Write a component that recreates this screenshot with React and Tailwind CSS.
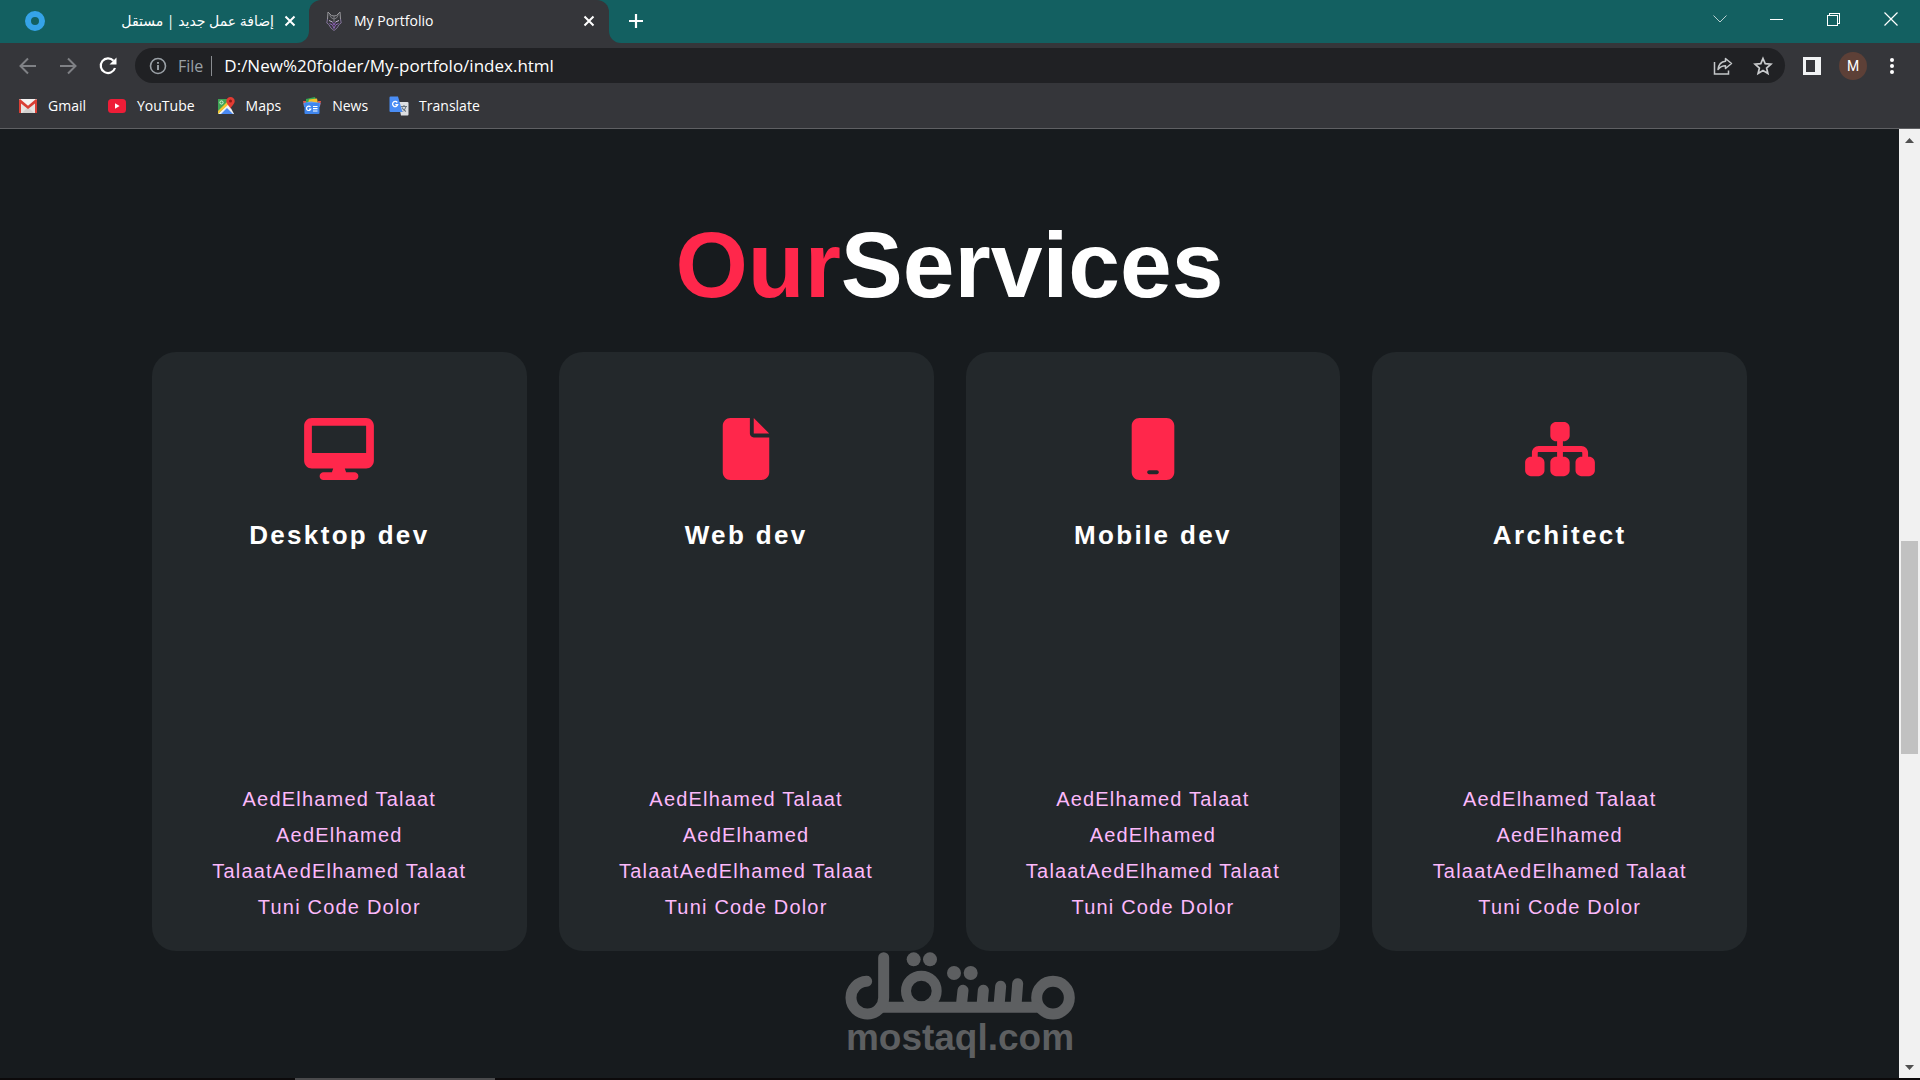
import React from "react";
import { FaDesktop, FaFile, FaMobile, FaSitemap } from "react-icons/fa6";

function CloseIcon({ className }) {
  return (
    <svg viewBox="0 0 12 12" className={className} fill="none" stroke="currentColor" strokeWidth="2">
      <path d="M1.5 1.5 10.5 10.5M10.5 1.5 1.5 10.5" />
    </svg>
  );
}

function WolfIcon() {
  return (
    <svg viewBox="0 0 16 20" className="h-5 w-4 shrink-0" fill="none" strokeWidth="1">
      <path d="M1.500 8 2 1 5.500 4.500 8 5l2.500-.5L14 1l.5 7" stroke="#98989c" />
      <path d="M3.500 3.500 5.500 7 8 8l2.500-1 2-3.500M8 5v6" stroke="#7d7d82" />
      <path d="M1.500 8 .8 12l2 1.500L5 17l3 2.500L11 17l2.200-3.500 2-1.500-.7-4" stroke="#83749a" />
      <path d="M3 9.500 6.500 11M13 9.500 9.500 11" stroke="#c3b6d3" />
      <path d="M3.500 12.500 6.500 14 8 17.500 9.500 14l3-1.500M6.500 11 8 14l1.500-3" stroke="#8f63b8" />
    </svg>
  );
}

function BackIcon({ flip }) {
  return (
    <svg viewBox="0 0 20 20" className={flip ? "size-5 -scale-x-100" : "size-5"} fill="none" stroke="currentColor" strokeWidth="2">
      <path d="M18 10H3M10 2.500 2.500 10l7.500 7.500" />
    </svg>
  );
}

function ReloadIcon() {
  return (
    <svg viewBox="0 0 20 20" className="size-5" fill="none" stroke="currentColor" strokeWidth="2.200">
      <path d="M15.500 4.800A7.300 7.300 0 1 0 17 12" />
      <path d="M18.500 1.500V8.500H11.500z" fill="currentColor" stroke="none" />
    </svg>
  );
}

function InfoIcon() {
  return (
    <svg viewBox="0 0 18 18" className="size-[18px]" fill="none" stroke="#9aa0a6" strokeWidth="1.600">
      <circle cx="9" cy="9" r="7.500" />
      <path d="M9 8v5M9 5v1.800" strokeWidth="1.900" />
    </svg>
  );
}

function ShareIcon() {
  return (
    <svg viewBox="0 0 20 20" className="size-5" fill="none" stroke="#c4c7c9" strokeWidth="1.500">
      <path d="M1.500 6V18H15.500V14.500" />
      <path d="M12.500 2.500 18.500 7.500 12.500 12.500V9.800C9 9.800 7 11 5 13.500 5.500 9 8 5.800 12.500 5.300z" strokeLinejoin="round" />
    </svg>
  );
}

function StarIcon() {
  return (
    <svg viewBox="0 0 20 20" className="size-5" fill="none" stroke="#c9cbcd" strokeWidth="1.700">
      <path d="M10 2.500 12.200 7.700 17.900 8.200 13.600 12 14.900 17.500 10 14.600 5.100 17.500 6.400 12 2.100 8.200 7.800 7.700z" />
    </svg>
  );
}

function GmailIcon() {
  return (
    <svg viewBox="0 0 20 20" className="size-5">
      <rect x="1" y="3" width="18" height="14" rx="1" fill="#e6e4e2" />
      <path d="M4 17 10 11l6 6z" fill="#d3d1cf" />
      <path d="M2 3h16l-8 7z" fill="#f4f2f1" />
      <path d="M1 17V4l1-1 8 6.800L18 3l1 1v13h-2V7.500L10 13 3 7.500V17z" fill="#d93f35" />
    </svg>
  );
}

function YouTubeIcon() {
  return (
    <svg viewBox="0 0 20 20" className="size-5">
      <rect x="1" y="3" width="18" height="14" rx="3.500" fill="#ee1d37" />
      <path d="M8 7.200v5.600l4.600-2.800z" fill="#fff" />
    </svg>
  );
}

function MapsIcon() {
  return (
    <svg viewBox="0 0 20 20" className="size-5">
      <path d="M2 3h11v15H2z" fill="#3fa455" />
      <path d="M2 18 12.500 7.500 18 18z" fill="#f1f3f4" />
      <path d="M5 18 11 12l6 6z" fill="#4a8af4" />
      <path d="M2 18v-3L11 6l2 2z" fill="#f6c433" />
      <circle cx="5.500" cy="6.500" r="1.600" fill="none" stroke="#dff1e2" />
      <path d="M14.500 1a4.200 4.200 0 0 1 4.200 4.200c0 3-3.700 5-4.200 7.800-.5-2.800-4.200-4.800-4.200-7.800A4.200 4.200 0 0 1 14.500 1z" fill="#e23c33" />
      <circle cx="14.500" cy="5" r="1.500" fill="#8d1b16" />
    </svg>
  );
}

function NewsIcon() {
  return (
    <svg viewBox="0 0 20 20" className="size-5">
      <path d="M4 3 13 1l2 6H4z" fill="#35a853" />
      <path d="M7 3.500 15 2.500l1 5H6z" fill="#f5bd2b" />
      <path d="M1 5h3v5H2zM16 5h3l-1 5h-2z" fill="#e2574c" />
      <path d="M1.500 7 9 5.500 18.500 7l-.8 4H2z" fill="#5a9bf6" />
      <rect x="2.500" y="7" width="15" height="11" rx="1" fill="#3f86ee" />
      <path d="M8.500 11A2.200 2.200 0 1 0 8.800 13H7M11 10.500h4.500M11 12.700h4.500M11 15h4.500" stroke="#fff" strokeWidth="1.200" fill="none" />
    </svg>
  );
}

function TranslateIcon() {
  return (
    <svg viewBox="0 0 20 20" className="size-5">
      <path d="M9 6h9.500a1 1 0 0 1 1 1v11.500a1 1 0 0 1-1 1H12z" fill="#dcdee1" />
      <path d="M12 10.500h6M15 9v1.500M17 10.500c-.5 2.500-2 4-3.500 5M13 11.500c.8 2 2.300 3.200 4 4" stroke="#6b7780" strokeWidth="1.100" fill="none" />
      <path d="M1.500.5H9L13.500 16h-12a1 1 0 0 1-1-1V1.500a1 1 0 0 1 1-1z" fill="#4a8df5" />
      <path d="M8.300 6.500A2.600 2.600 0 1 0 8.700 8.700H6.300" stroke="#fff" strokeWidth="1.300" fill="none" />
    </svg>
  );
}

const bookmarks = [
  { label: "Gmail", Icon: GmailIcon },
  { label: "YouTube", Icon: YouTubeIcon },
  { label: "Maps", Icon: MapsIcon },
  { label: "News", Icon: NewsIcon },
  { label: "Translate", Icon: TranslateIcon },
];

const services = [
  { title: "Desktop dev", Icon: FaDesktop },
  { title: "Web dev", Icon: FaFile },
  { title: "Mobile dev", Icon: FaMobile },
  { title: "Architect", Icon: FaSitemap },
];

function TabStrip() {
  return (
    <div className="flex h-[43px] bg-[#35363a] text-sm text-white">
      <div className="flex w-[309px] items-center rounded-br-xl bg-[#136061] pb-0.5 pl-[25px] pr-[9px]">
        <svg viewBox="0 0 20 20" className="size-5 shrink-0" fill="none" stroke="#35a3e8" strokeWidth="6">
          <circle cx="10" cy="10" r="7" />
        </svg>
        <span dir="rtl" lang="ar" className="flex-1 whitespace-nowrap text-right">
          إضافة عمل جديد | مستقل
        </span>
        <button aria-label="Close tab" className="ml-[6px] flex size-5 items-center justify-center">
          <CloseIcon className="size-3" />
        </button>
      </div>
      <div className="w-[300px] bg-[linear-gradient(#136061_50%,#35363a_50%)]">
        <div className="flex h-full items-center rounded-t-xl bg-[#35363a] pb-0.5 pl-[17px] pr-[10px]">
          <WolfIcon />
          <span className="ml-3 flex-1">My Portfolio</span>
          <button aria-label="Close tab" className="flex size-5 items-center justify-center">
            <CloseIcon className="size-3" />
          </button>
        </div>
      </div>
      <div className="flex flex-1 justify-between rounded-bl-xl bg-[#136061] pl-[11px] pr-px">
        <button aria-label="New tab" className="flex w-8 items-center justify-center pb-0.5">
          <svg viewBox="0 0 16 16" className="size-4" stroke="#fff" strokeWidth="2.200">
            <path d="M8 1v14M1 8h14" />
          </svg>
        </button>
        <div className="flex h-[38px]">
          <button aria-label="Search tabs" className="flex w-[57px] items-center justify-center">
            <svg viewBox="0 0 14 8" className="h-2 w-3.5" fill="none" stroke="#b8cfd0" strokeWidth="1">
              <path d="M.5.5 7 7l6.500-6.500" />
            </svg>
          </button>
          <button aria-label="Minimize" className="flex w-[57px] items-center justify-center">
            <span className="h-px w-[13px] bg-white" />
          </button>
          <button aria-label="Restore" className="flex w-[57px] items-center justify-center">
            <svg viewBox="0 0 13 13" className="size-[13px]" fill="none" stroke="#fff" shapeRendering="crispEdges">
              <path d="M.5 2.500h10v10H.5zM2.500 2.500v-2h10v10h-2" />
            </svg>
          </button>
          <button aria-label="Close" className="flex w-[57px] items-center justify-center">
            <svg viewBox="0 0 14 14" className="size-3.5" fill="none" stroke="#fff" strokeWidth="1.200">
              <path d="M.5.5 13.500 13.500M13.500.5.5 13.500" />
            </svg>
          </button>
        </div>
      </div>
    </div>
  );
}

function Toolbar() {
  return (
    <div className="flex h-[45px] items-center bg-[#35363a] pr-[18px]">
      <div className="flex w-[135px] items-center gap-5 pl-[18px] text-[#7f8185]">
        <button aria-label="Back"><BackIcon /></button>
        <button aria-label="Forward"><BackIcon flip /></button>
        <button aria-label="Reload" className="text-white"><ReloadIcon /></button>
      </div>
      <div className="flex h-[35px] flex-1 items-center rounded-full bg-[#202124] pl-[14px] pr-3">
        <InfoIcon />
        <span className="ml-[11px] text-base text-[#9aa0a6]">File</span>
        <span className="ml-2 mr-3 h-5 w-px bg-[#8a8d91]" />
        <input
          aria-label="Address"
          defaultValue="D:/New%20folder/My-portfolo/index.html"
          className="min-w-0 flex-1 bg-transparent text-[17px] text-white outline-none"
        />
        <button aria-label="Share" className="mr-5"><ShareIcon /></button>
        <button aria-label="Bookmark this tab"><StarIcon /></button>
      </div>
      <button aria-label="Side panel" className="ml-[18px]">
        <svg viewBox="0 0 18 18" className="size-[18px]">
          <path d="M0 0h18v18H0zM3 3v12h9V3z" fill="#f1f3f4" fillRule="evenodd" />
        </svg>
      </button>
      <button
        aria-label="Profile"
        className="ml-[18px] flex size-7 items-center justify-center rounded-full bg-[#5d4037] font-['Roboto',sans-serif] text-sm text-white"
      >
        M
      </button>
      <button aria-label="Menu" className="ml-[15px] flex w-5 flex-col items-center gap-[2px]">
        <span className="size-1 rounded-full bg-white" />
        <span className="size-1 rounded-full bg-white" />
        <span className="size-1 rounded-full bg-white" />
      </button>
    </div>
  );
}

function BookmarksBar() {
  return (
    <nav className="flex h-[41px] items-center gap-[21px] border-b border-[#5f6063] bg-[#35363a] pb-1 pl-[18px] text-sm text-white">
      {bookmarks.map(({ label, Icon }) => (
        <a key={label} href="#" className="flex items-center gap-[10px]">
          <Icon />
          {label}
        </a>
      ))}
    </nav>
  );
}

function ServiceCard({ title, Icon }) {
  return (
    <article className="flex h-[599px] flex-col items-center rounded-3xl bg-[#23282b] px-12 pb-[26px] pt-[66px] text-center">
      <Icon className="h-[62px] w-[70px] text-[#ff274b]" />
      <h2 className="mt-[39px] text-[26px] font-bold leading-8 tracking-[0.09em] text-white">{title}</h2>
      <p className="mt-auto text-xl leading-9 tracking-[0.06em] text-[#fcb9fb]">
        AedElhamed Talaat AedElhamed TalaatAedElhamed Talaat Tuni Code Dolor
      </p>
    </article>
  );
}

function PageScrollbar() {
  return (
    <div className="flex w-[21px] shrink-0 flex-col items-center bg-[#f1f1f1]">
      <svg viewBox="0 0 21 21" className="size-[21px]" fill="#505050"><path d="M6 14h9l-4.500-5z" /></svg>
      <div className="grow-[391]" />
      <div className="w-[17px] grow-[213] bg-[#c1c1c1]" />
      <div className="grow-[303]" />
      <svg viewBox="0 0 21 21" className="size-[21px]" fill="#505050"><path d="M6 8h9l-4.500 5z" /></svg>
    </div>
  );
}

function Watermark() {
  return (
    <div className="absolute bottom-6 left-1/2 flex -translate-x-1/2 flex-col items-center text-[#5d5f61]">
      <svg
        viewBox="75 66 690 204"
        className="h-[68px] w-[230px]"
        fill="none"
        stroke="currentColor"
        strokeWidth="33"
        strokeLinecap="round"
        role="img"
        aria-label="مستقل"
      >
        <circle cx="699" cy="203" r="49" />
        <circle cx="304" cy="183" r="46" strokeWidth="30" />
        <path d="M648 232H190M593 161l-5 66M542 169l-5 58M490 181l-4 46M429 181l-5 46" />
        <path d="M191 83V203A49 49 0 1 1 140 154" />
        <g fill="currentColor" stroke="none">
          <circle cx="281" cy="88" r="21" />
          <circle cx="330" cy="88" r="21" />
          <circle cx="402" cy="129" r="21" />
          <circle cx="452" cy="129" r="21" />
        </g>
      </svg>
      <span className="text-[37px] font-bold leading-9">mostaql.com</span>
    </div>
  );
}

export default function App() {
  return (
    <div className="relative flex min-h-screen flex-col bg-[#171b1e] font-['Liberation_Sans',Arial,sans-serif]">
      <header className="font-['Open_Sans','Noto_Sans','DejaVu_Sans',sans-serif]">
        <TabStrip />
        <Toolbar />
        <BookmarksBar />
      </header>
      <div className="flex flex-1">
        <main className="flex-1 pt-[89px]">
          <h1 className="text-center text-[93px] font-bold leading-[94px] text-white">
            <span className="text-[#ff274b]">Our</span>Services
          </h1>
          <section className="mt-10 grid grid-cols-4 gap-8 px-[8%]">
            {services.map((service) => (
              <ServiceCard key={service.title} {...service} />
            ))}
          </section>
        </main>
        <PageScrollbar />
      </div>
      <div className="h-0.5 bg-[#0c0a0b] pl-[295px]">
        <div className="h-full w-[200px] bg-[#4a4a4c]" />
      </div>
      <Watermark />
    </div>
  );
}
